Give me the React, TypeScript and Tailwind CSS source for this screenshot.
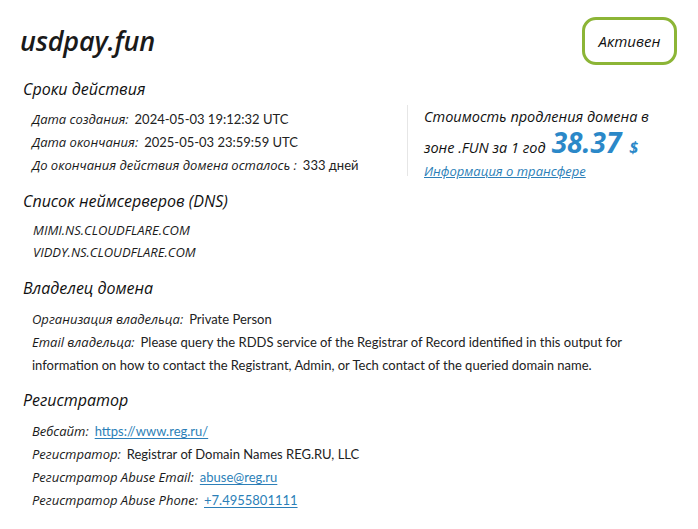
import React from 'react';

const font = { fontFamily: '"Open Sans", "Noto Sans", sans-serif' };
const valueFont = { fontFamily: 'Lato, "Open Sans", sans-serif' };

const Row = ({ label, children }: { label: string; children: React.ReactNode }) => (
  <div className="leading-[23px] text-[13px] text-[#222]">
    <span className="italic text-[#1a1a1a]">{label}:</span>
    <span style={valueFont} className="ml-[6px]">{children}</span>
  </div>
);

const Heading = ({ children }: { children: React.ReactNode }) => (
  <h2 className="h-7 leading-7 text-[16px] italic font-medium text-[#111]">{children}</h2>
);

const A = ({ children }: { children: React.ReactNode }) => (
  <a href="#" className="text-[#2c7fb8] underline underline-offset-2">{children}</a>
);

export default function App() {
  return (
    <div style={font} className="w-[698px] h-[529px] bg-white pl-[20px] pr-[21px] overflow-hidden">
      <div className="flex items-center justify-between pt-[17px] h-[65px]">
        <h1 className="text-[27px] italic font-semibold text-[#1a1a1a] tracking-[-0.2px]">usdpay.fun</h1>
        <div className="w-[95px] h-12 rounded-[14px] border-[3px] border-[#8cb536] flex items-center justify-center text-[15px] italic text-[#111]">
          Активен
        </div>
      </div>

      <section className="mt-[10px]">
        <div className="pl-[3px]"><Heading>Сроки действия</Heading></div>
        <div className="flex mt-[2px]">
          <div className="w-[387px] pl-[12px] pt-[3px]">
            <Row label="Дата создания">2024-05-03 19:12:32 UTC</Row>
            <Row label="Дата окончания">2025-05-03 23:59:59 UTC</Row>
            <Row label="До окончания действия домена осталось ">333 дней</Row>
          </div>
          <div className="border-l border-[#e6e6e6] pl-[16px] h-[71px]">
            <div className="text-[14.5px] italic font-medium text-[#111] leading-[24px]">Стоимость продления домена в</div>
            <div className="text-[14.5px] italic font-medium text-[#111] leading-[26px] flex items-baseline">
              <span>зоне .FUN за 1 год</span>
              <span className="ml-[6px] text-[28px] leading-[26px] font-bold text-[#2b88c8]">38.37</span>
              <span className="ml-[8px] text-[16px] font-bold text-[#2b88c8]">$</span>
            </div>
            <a href="#" className="block text-[13px] italic text-[#2c7fb8] underline leading-[20px]">Информация о трансфере</a>
          </div>
        </div>
      </section>

      <section className="mt-[10px]">
        <div className="pl-[3px]"><Heading>Список неймсерверов (DNS)</Heading></div>
        <div className="pl-[13px] mt-[4px] text-[13px] italic text-[#1a1a1a] leading-[22px]">
          <div>MIMI.NS.CLOUDFLARE.COM</div>
          <div>VIDDY.NS.CLOUDFLARE.COM</div>
        </div>
      </section>

      <section className="mt-[11px]">
        <div className="pl-[3px]"><Heading>Владелец домена</Heading></div>
        <div className="pl-[12px] mt-[6px]">
          <Row label="Организация владельца">Private Person</Row>
          <Row label="Email владельца">
            Please query the RDDS service of the Registrar of Record identified in this output for information on how
            to contact the Registrant, Admin, or Tech contact of the queried domain name.
          </Row>
        </div>
      </section>

      <section className="mt-[9px]">
        <div className="pl-[3px]"><Heading>Регистратор</Heading></div>
        <div className="pl-[12px] mt-[6px]">
          <Row label="Вебсайт"><A>https://www.reg.ru/</A></Row>
          <Row label="Регистратор">Registrar of Domain Names REG.RU, LLC</Row>
          <Row label="Регистратор Abuse Email"><A>abuse@reg.ru</A></Row>
          <Row label="Регистратор Abuse Phone"><A>+7.4955801111</A></Row>
        </div>
      </section>
    </div>
  );
}
